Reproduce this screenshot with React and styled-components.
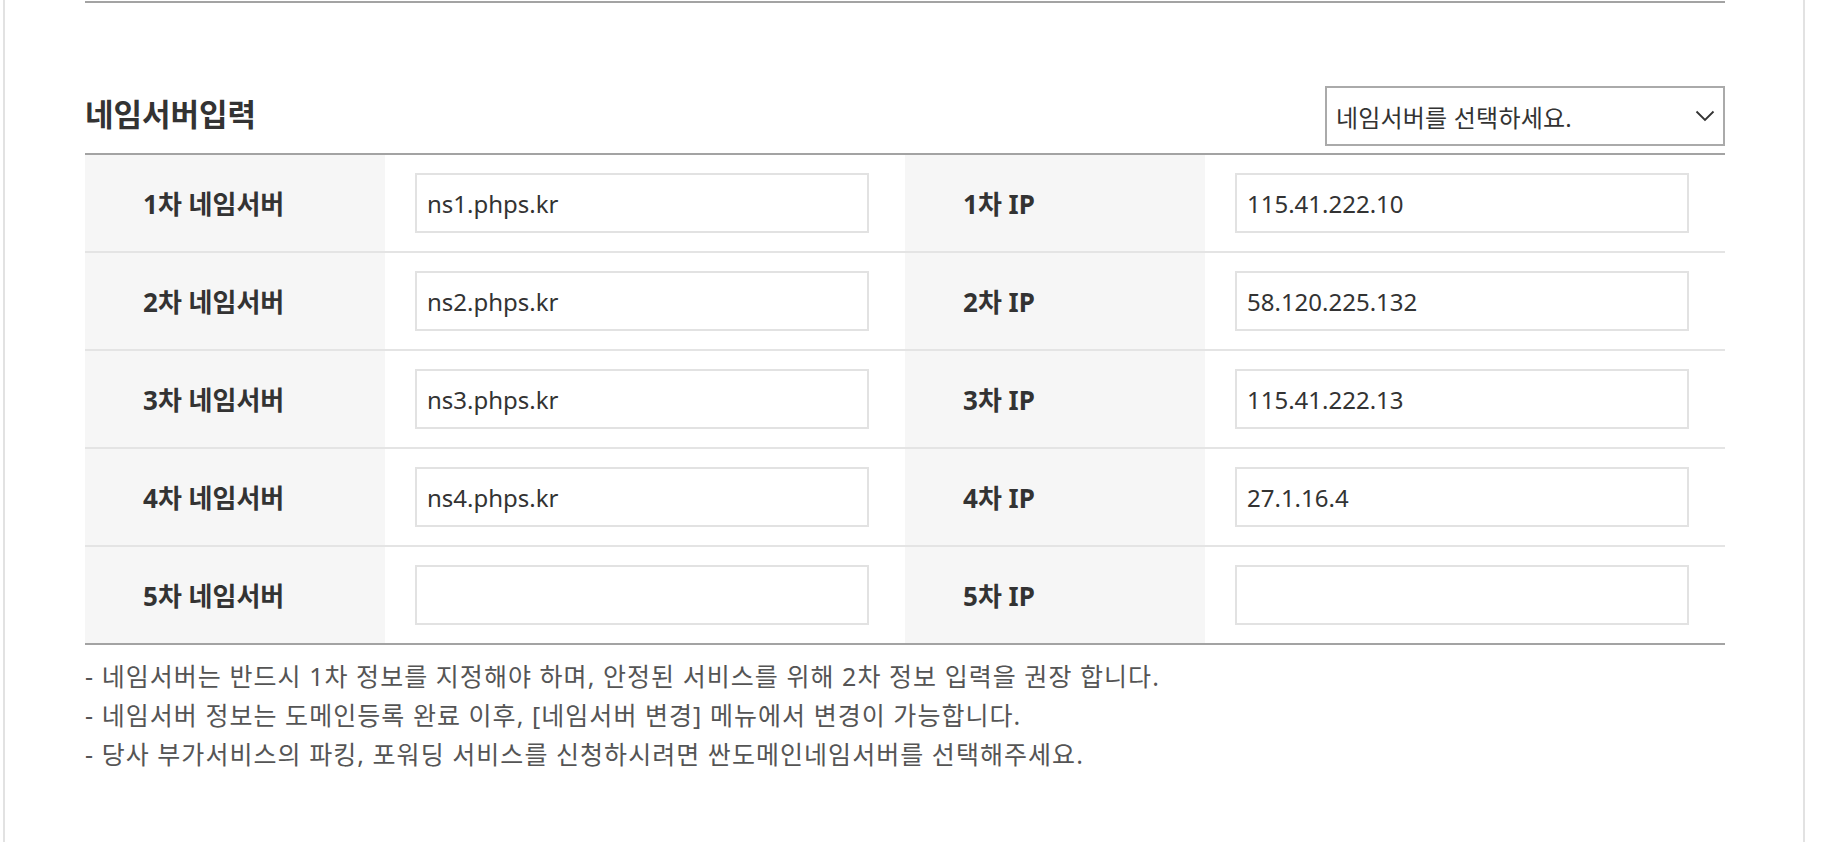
import React from "react";
import styled, { createGlobalStyle } from "styled-components";

const GlobalStyle = createGlobalStyle`
  html, body {
    margin: 0;
    padding: 0;
    background: #ffffff;
  }
  body {
    font-family: "Noto Sans", "Noto Sans CJK KR", sans-serif;
    color: #333333;
  }
`;

const Page = styled.div`
  margin-left: 3px;
  width: 1802px;
  min-height: 842px;
  box-sizing: border-box;
  border-left: 2px solid #e2e2e2;
  border-right: 2px solid #e2e2e2;
  padding: 1px 78px 0 80px;
`;

const Content = styled.div`
  width: 1640px;
`;

const TopRule = styled.div`
  border-top: 2px solid #a3a3a3;
`;

const Header = styled.div`
  display: flex;
  justify-content: space-between;
  align-items: center;
  height: 60px;
  margin-top: 83px;
  padding-bottom: 7px;
`;

const Title = styled.h2`
  margin: 0 0 4px;
  font-size: 31px;
  font-weight: 700;
  line-height: 56px;
  color: #333333;
`;

const SelectBox = styled.div`
  display: flex;
  align-items: center;
  justify-content: space-between;
  width: 400px;
  height: 60px;
  box-sizing: border-box;
  border: 2px solid #aaaaaa;
  padding: 0 8px 0 9px;
  font-size: 24px;
  letter-spacing: 0.2px;
  color: #333333;
  cursor: pointer;
`;

const Table = styled.div`
  border-top: 2px solid #a3a3a3;
`;

const Row = styled.div`
  display: grid;
  grid-template-columns: 300px 520px 300px 520px;
  height: 98px;
  box-sizing: border-box;
  border-bottom: 2px solid ${(p) => (p.last ? "#a3a3a3" : "#e4e4e4")};
`;

const LabelCell = styled.div`
  display: flex;
  align-items: center;
  background: #f6f6f6;
  padding-left: 58px;
  font-size: 26px;
  font-weight: 700;
  color: #333333;
`;

const InputCell = styled.div`
  display: flex;
  align-items: center;
  padding-left: 30px;
`;

const TextInput = styled.input`
  width: 454px;
  height: 60px;
  box-sizing: border-box;
  border: 2px solid #e2e2e2;
  padding: 0 10px;
  font-family: "Noto Sans", "Noto Sans CJK KR", sans-serif;
  font-size: 24px;
  color: #333333;
  outline: none;
  background: #ffffff;
`;

const Notes = styled.ul`
  list-style: none;
  margin: 12px 0 0;
  padding: 0;
  font-size: 25px;
  letter-spacing: 1.05px;
  line-height: 39px;
  color: #555555;
`;

const Chevron = () => (
  <svg width="20" height="12" viewBox="0 0 20 12" fill="none">
    <path d="M1.5 1.5 L10 10 L18.5 1.5" stroke="#333" strokeWidth="1.8" />
  </svg>
);

const rows = [
  { n: 1, ns: "ns1.phps.kr", ip: "115.41.222.10" },
  { n: 2, ns: "ns2.phps.kr", ip: "58.120.225.132" },
  { n: 3, ns: "ns3.phps.kr", ip: "115.41.222.13" },
  { n: 4, ns: "ns4.phps.kr", ip: "27.1.16.4" },
  { n: 5, ns: "", ip: "" },
];

const notes = [
  "- 네임서버는 반드시 1차 정보를 지정해야 하며, 안정된 서비스를 위해 2차 정보 입력을 권장 합니다.",
  "- 네임서버 정보는 도메인등록 완료 이후, [네임서버 변경] 메뉴에서 변경이 가능합니다.",
  "- 당사 부가서비스의 파킹, 포워딩 서비스를 신청하시려면 싼도메인네임서버를 선택해주세요.",
];

export default function App() {
  return (
    <>
      <GlobalStyle />
      <Page>
        <Content>
          <TopRule />
          <Header>
            <Title>네임서버입력</Title>
            <SelectBox>
              <span>네임서버를 선택하세요.</span>
              <Chevron />
            </SelectBox>
          </Header>
          <Table>
            {rows.map((r, i) => (
              <Row key={r.n} last={i === rows.length - 1}>
                <LabelCell>{r.n}차 네임서버</LabelCell>
                <InputCell>
                  <TextInput type="text" defaultValue={r.ns} />
                </InputCell>
                <LabelCell>{r.n}차 IP</LabelCell>
                <InputCell>
                  <TextInput type="text" defaultValue={r.ip} />
                </InputCell>
              </Row>
            ))}
          </Table>
          <Notes>
            {notes.map((t) => (
              <li key={t}>{t}</li>
            ))}
          </Notes>
        </Content>
      </Page>
    </>
  );
}
